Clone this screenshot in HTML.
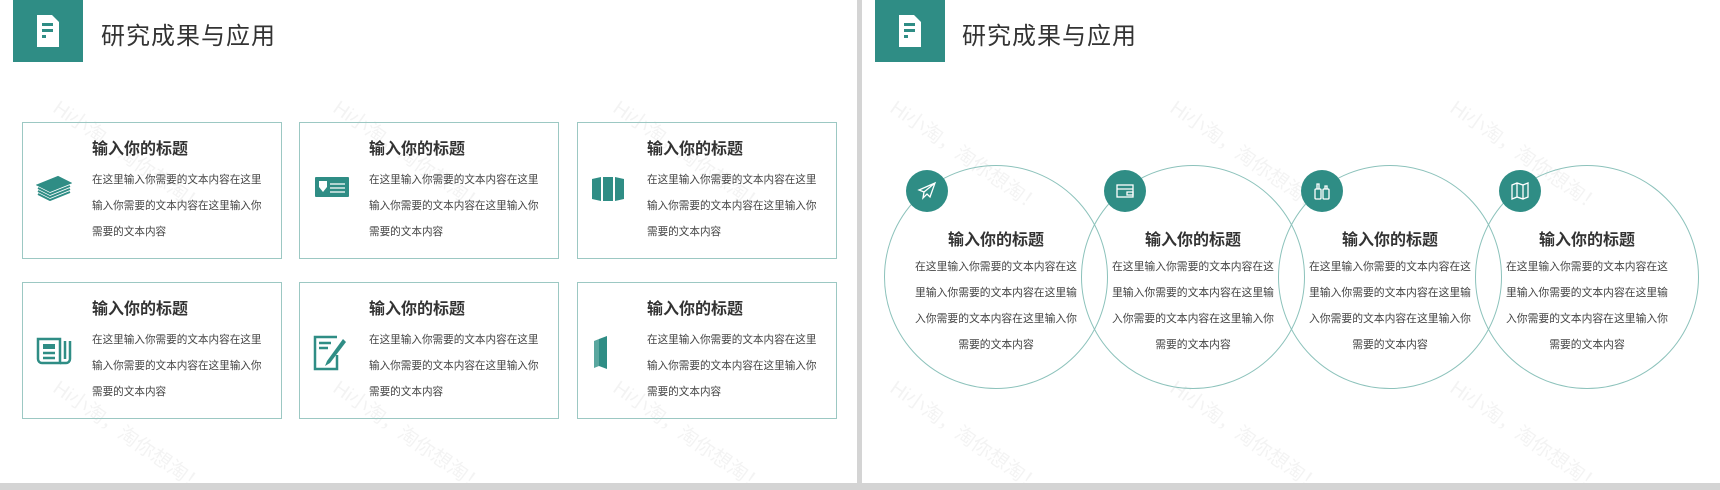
<!DOCTYPE html>
<html><head><meta charset="utf-8"><style>
*{margin:0;padding:0;box-sizing:border-box}
body{width:1720px;height:490px;background:#d4d4d4;position:relative;overflow:hidden;font-family:"Liberation Sans","Noto Sans CJK SC",sans-serif}
.panel{position:absolute;top:0;height:483px;background:#fff;overflow:hidden}
.hd{position:absolute;top:0;width:70px;height:62px;background:#2f8d85}
.hd svg{position:absolute;left:24px;top:15px}
.ttl{position:absolute;top:16px;font-size:24px;color:#333;letter-spacing:1px}
.card{position:absolute;width:260px;height:137px;border:1.5px solid #9cc8c3;background:transparent}
.card h3{position:absolute;left:69px;top:12px;font-size:16px;font-weight:bold;color:#333}
.card p{position:absolute;left:69px;top:44px;white-space:nowrap;font-size:10.6px;line-height:26px;color:#444}
.card svg{position:absolute;left:13px;top:52px}
.wm{position:absolute;color:#000;opacity:.045;font-size:20px;transform:rotate(35deg);transform-origin:left top;white-space:nowrap}
.circ{position:absolute;width:224px;height:224px;border:1.3px solid #8cc2bb;border-radius:50%;top:165px}
.dot{position:absolute;width:42px;height:42px;border-radius:50%;background:#2f8d85;top:170px}
.dot svg{position:absolute;left:11px;top:11px}
.ct{position:absolute;width:190px;text-align:center;top:226px;font-size:16px;font-weight:bold;color:#333}
.cb{position:absolute;width:172px;text-align:center;top:254px;font-size:10.8px;line-height:26px;color:#444;white-space:nowrap}
</style></head><body>
<div class="panel" style="left:0;width:857px">
<div class="hd" style="left:13px"><svg width="22" height="32" viewBox="0 0 22 32"><path d="M0 0H15L22 7V32H0Z" fill="#fff"/><rect x="5" y="8" width="11" height="3" fill="#2f8d85"/><rect x="5" y="14" width="11" height="3" fill="#2f8d85"/><rect x="5" y="20" width="4" height="3" fill="#2f8d85"/></svg></div>
<div class="ttl" style="left:101px">研究成果与应用</div>
<div class="wm" style="left:65px;top:92px">Hi小淘，淘你想淘！</div>
<div class="wm" style="left:345px;top:92px">Hi小淘，淘你想淘！</div>
<div class="wm" style="left:625px;top:92px">Hi小淘，淘你想淘！</div>
<div class="wm" style="left:65px;top:372px">Hi小淘，淘你想淘！</div>
<div class="wm" style="left:345px;top:372px">Hi小淘，淘你想淘！</div>
<div class="wm" style="left:625px;top:372px">Hi小淘，淘你想淘！</div>

<div class="card" style="left:22px;top:122px"><svg width="36" height="26" viewBox="0 0 36 26" fill="none" stroke="#2f8d85" stroke-width="2"><path d="M2 10L22 2L34 8L14 16Z" fill="#2f8d85"/><path d="M2 13L14 19L34 11M2 16L14 22L34 14M2 19L14 25L34 17"/></svg><h3>输入你的标题</h3><p>在这里输入你需要的文本内容在这里<br>输入你需要的文本内容在这里输入你<br>需要的文本内容</p></div>
<div class="card" style="left:299px;top:122px"><svg width="36" height="24" viewBox="0 0 36 24"><rect x="2" y="2" width="34" height="20" rx="1" fill="#2f8d85"/><path d="M6 6h8v6l-4 5-4-5z" fill="#fff"/><path d="M17 9h15M17 13h15M17 17h15" stroke="#fff" stroke-width="1.2"/></svg><h3>输入你的标题</h3><p>在这里输入你需要的文本内容在这里<br>输入你需要的文本内容在这里输入你<br>需要的文本内容</p></div>
<div class="card" style="left:577px;top:122px"><svg width="34" height="28" viewBox="0 0 34 28"><path d="M1 4L10 2V26L1 24Z M12 2H22V26H12Z M24 2L33 4V24L24 26Z" fill="#2f8d85"/></svg><h3>输入你的标题</h3><p>在这里输入你需要的文本内容在这里<br>输入你需要的文本内容在这里输入你<br>需要的文本内容</p></div>
<div class="card" style="left:22px;top:282px"><svg width="36" height="32" viewBox="0 0 36 32" fill="none" stroke="#2f8d85" stroke-width="2.5"><path d="M2 4h22v24H6a4 4 0 0 1-4-4z"/><path d="M24 28h6a4 4 0 0 0 4-4V6M29 6v18"/><rect x="7" y="9" width="12" height="5" fill="#2f8d85" stroke="none"/><path d="M7 18h12M7 23h12"/></svg><h3>输入你的标题</h3><p>在这里输入你需要的文本内容在这里<br>输入你需要的文本内容在这里输入你<br>需要的文本内容</p></div>
<div class="card" style="left:299px;top:282px"><svg width="34" height="36" viewBox="0 0 34 36" fill="none" stroke="#2f8d85" stroke-width="2.5"><path d="M24 2H2V34H24V20"/><path d="M6 8h12M6 13h9"/><path d="M30 4L14 26L12 31L17 28L33 7Z" fill="#2f8d85" stroke="none"/></svg><h3>输入你的标题</h3><p>在这里输入你需要的文本内容在这里<br>输入你需要的文本内容在这里输入你<br>需要的文本内容</p></div>
<div class="card" style="left:577px;top:282px"><svg width="30" height="36" viewBox="0 0 30 36"><path d="M8 4L16 1V34L8 31Z" fill="#2f8d85"/><path d="M8 4L3 6V33L8 31Z" fill="#5aa79f"/></svg><h3>输入你的标题</h3><p>在这里输入你需要的文本内容在这里<br>输入你需要的文本内容在这里输入你<br>需要的文本内容</p></div>
</div>

<div class="panel" style="left:862px;width:858px">
<div class="hd" style="left:13px"><svg width="22" height="32" viewBox="0 0 22 32"><path d="M0 0H15L22 7V32H0Z" fill="#fff"/><rect x="5" y="8" width="11" height="3" fill="#2f8d85"/><rect x="5" y="14" width="11" height="3" fill="#2f8d85"/><rect x="5" y="20" width="4" height="3" fill="#2f8d85"/></svg></div>
<div class="ttl" style="left:100px">研究成果与应用</div>
<div class="wm" style="left:40px;top:92px">Hi小淘，淘你想淘！</div>
<div class="wm" style="left:320px;top:92px">Hi小淘，淘你想淘！</div>
<div class="wm" style="left:600px;top:92px">Hi小淘，淘你想淘！</div>
<div class="wm" style="left:40px;top:372px">Hi小淘，淘你想淘！</div>
<div class="wm" style="left:320px;top:372px">Hi小淘，淘你想淘！</div>
<div class="wm" style="left:600px;top:372px">Hi小淘，淘你想淘！</div>

<div class="circ" style="left:22px"></div>
<div class="circ" style="left:219px"></div>
<div class="circ" style="left:416px"></div>
<div class="circ" style="left:613px"></div>

<div class="dot" style="left:44px"><svg width="20" height="20" viewBox="0 0 20 20" fill="none" stroke="#fff" stroke-width="1.3"><path d="M18 2L2 9L7 11L6 17L10 13L13 16Z M7 11L18 2"/></svg></div>
<div class="dot" style="left:242px"><svg width="20" height="20" viewBox="0 0 20 20" fill="none" stroke="#fff" stroke-width="1.3"><rect x="2" y="4" width="16" height="12"/><path d="M2 8h16M12 11h6v3h-6z"/></svg></div>
<div class="dot" style="left:439px"><svg width="20" height="20" viewBox="0 0 20 20" fill="none" stroke="#fff" stroke-width="1.3"><rect x="3" y="8" width="6" height="10" rx="1"/><rect x="11" y="8" width="6" height="10" rx="1"/><path d="M5 8V3h2v5M13 8V5h2v3"/></svg></div>
<div class="dot" style="left:637px"><svg width="20" height="20" viewBox="0 0 20 20" fill="none" stroke="#fff" stroke-width="1.3"><path d="M2 4L7 2L13 4L18 2V16L13 18L7 16L2 18Z M7 2V16M13 4V18"/></svg></div>

<div class="ct" style="left:39px">输入你的标题</div>
<div class="ct" style="left:236px">输入你的标题</div>
<div class="ct" style="left:433px">输入你的标题</div>
<div class="ct" style="left:630px">输入你的标题</div>
<div class="cb" style="left:48px">在这里输入你需要的文本内容在这<br>里输入你需要的文本内容在这里输<br>入你需要的文本内容在这里输入你<br>需要的文本内容</div>
<div class="cb" style="left:245px">在这里输入你需要的文本内容在这<br>里输入你需要的文本内容在这里输<br>入你需要的文本内容在这里输入你<br>需要的文本内容</div>
<div class="cb" style="left:442px">在这里输入你需要的文本内容在这<br>里输入你需要的文本内容在这里输<br>入你需要的文本内容在这里输入你<br>需要的文本内容</div>
<div class="cb" style="left:639px">在这里输入你需要的文本内容在这<br>里输入你需要的文本内容在这里输<br>入你需要的文本内容在这里输入你<br>需要的文本内容</div>
</div>
</body></html>
